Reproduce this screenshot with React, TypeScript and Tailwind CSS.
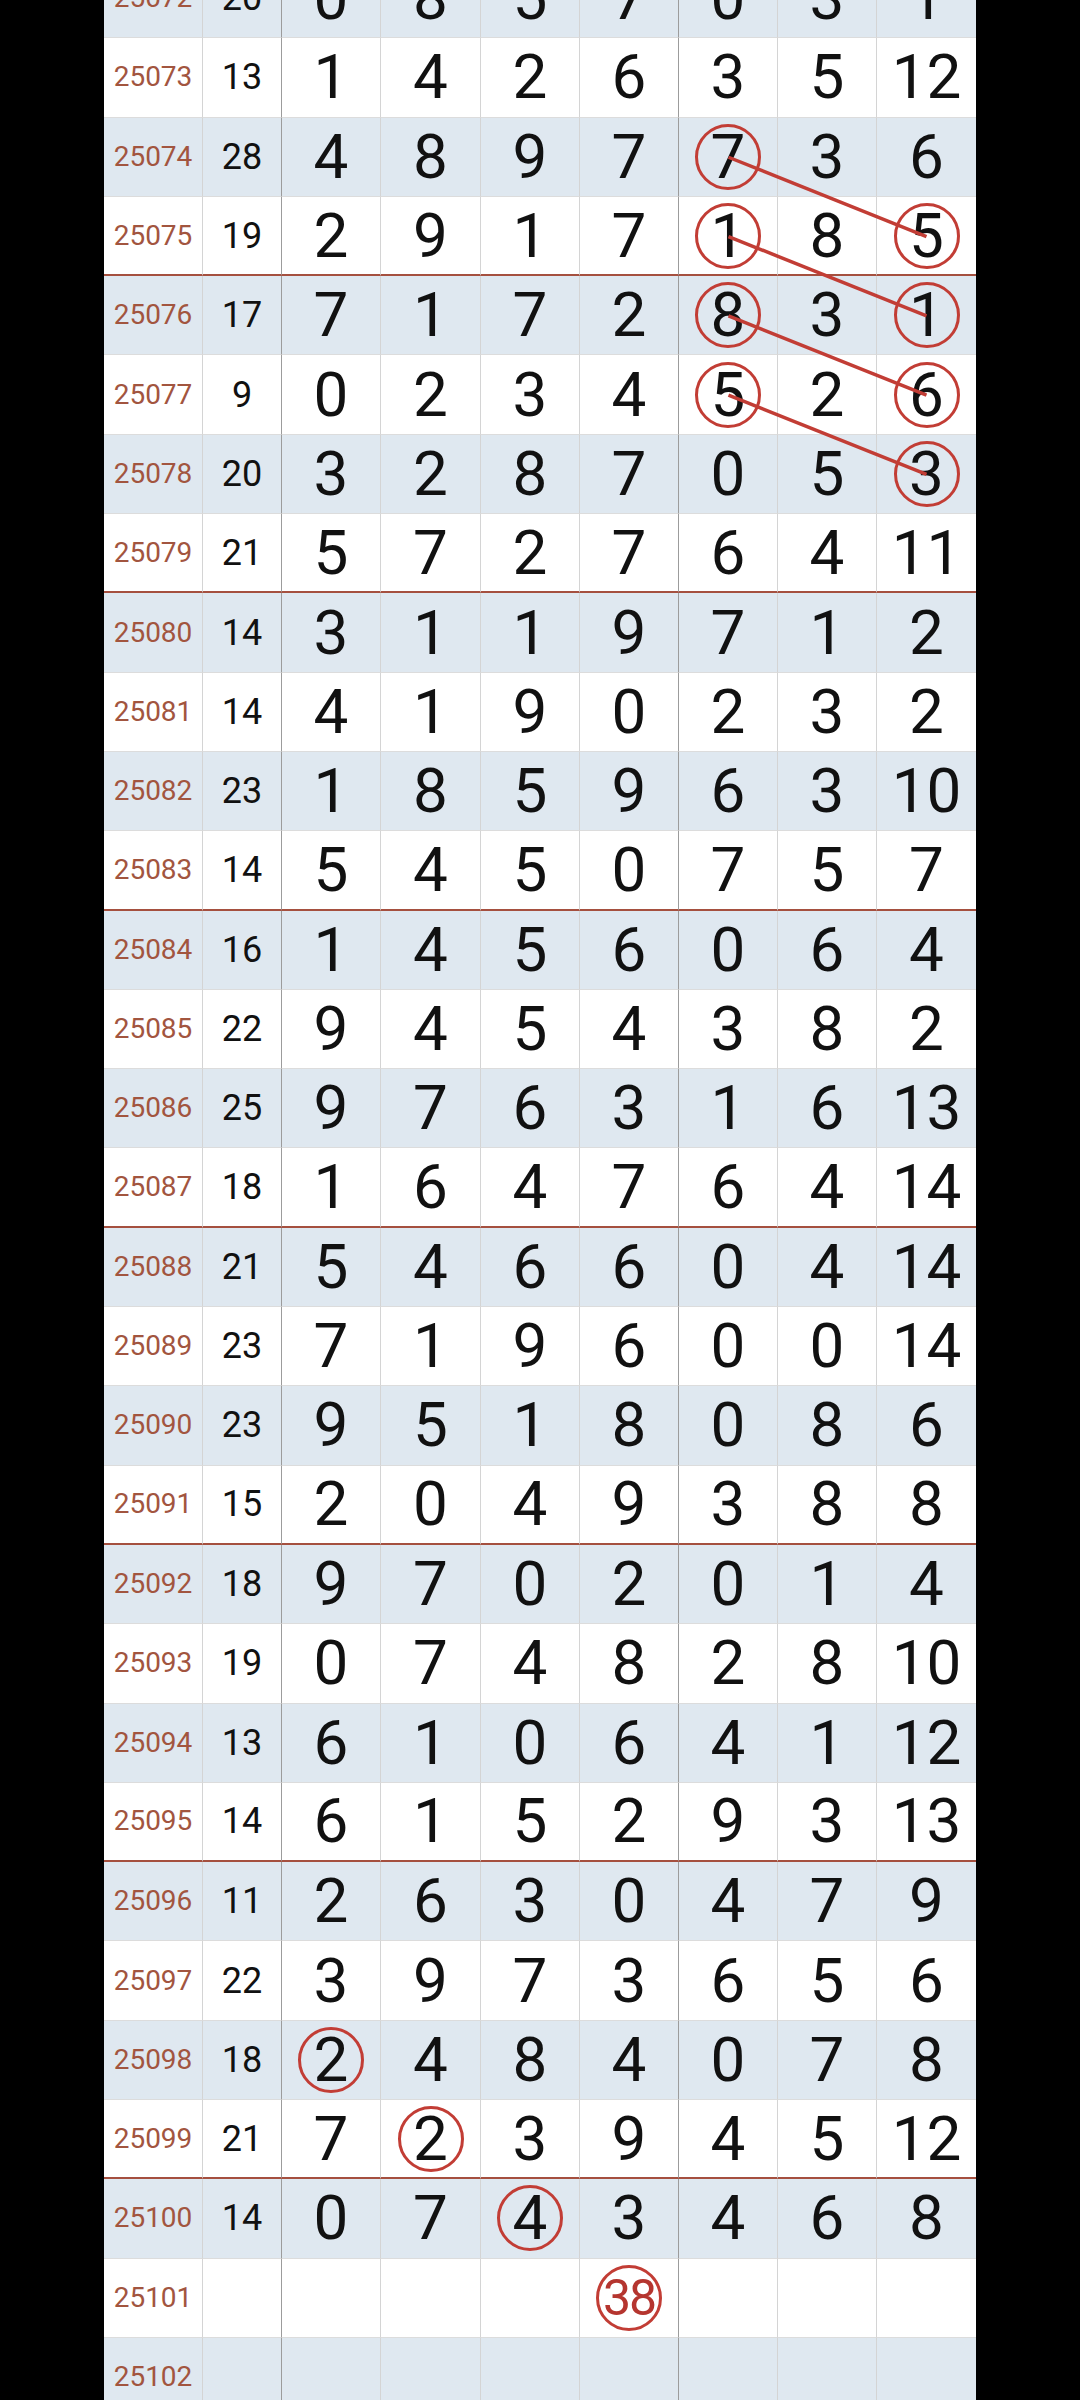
import React from 'react';

// Draw history table: id, sum of the first four, then seven digit columns
type Row = {
  id: number;
  sum?: number;
  nums: (number | null)[];
};

const raw: [number, number | null, (number | null)[]][] = [
  [25072, 20, [0, 8, 5, 7, 0, 3, 1]],
  [25073, 13, [1, 4, 2, 6, 3, 5, 12]],
  [25074, 28, [4, 8, 9, 7, 7, 3, 6]],
  [25075, 19, [2, 9, 1, 7, 1, 8, 5]],
  [25076, 17, [7, 1, 7, 2, 8, 3, 1]],
  [25077, 9, [0, 2, 3, 4, 5, 2, 6]],
  [25078, 20, [3, 2, 8, 7, 0, 5, 3]],
  [25079, 21, [5, 7, 2, 7, 6, 4, 11]],
  [25080, 14, [3, 1, 1, 9, 7, 1, 2]],
  [25081, 14, [4, 1, 9, 0, 2, 3, 2]],
  [25082, 23, [1, 8, 5, 9, 6, 3, 10]],
  [25083, 14, [5, 4, 5, 0, 7, 5, 7]],
  [25084, 16, [1, 4, 5, 6, 0, 6, 4]],
  [25085, 22, [9, 4, 5, 4, 3, 8, 2]],
  [25086, 25, [9, 7, 6, 3, 1, 6, 13]],
  [25087, 18, [1, 6, 4, 7, 6, 4, 14]],
  [25088, 21, [5, 4, 6, 6, 0, 4, 14]],
  [25089, 23, [7, 1, 9, 6, 0, 0, 14]],
  [25090, 23, [9, 5, 1, 8, 0, 8, 6]],
  [25091, 15, [2, 0, 4, 9, 3, 8, 8]],
  [25092, 18, [9, 7, 0, 2, 0, 1, 4]],
  [25093, 19, [0, 7, 4, 8, 2, 8, 10]],
  [25094, 13, [6, 1, 0, 6, 4, 1, 12]],
  [25095, 14, [6, 1, 5, 2, 9, 3, 13]],
  [25096, 11, [2, 6, 3, 0, 4, 7, 9]],
  [25097, 22, [3, 9, 7, 3, 6, 5, 6]],
  [25098, 18, [2, 4, 8, 4, 0, 7, 8]],
  [25099, 21, [7, 2, 3, 9, 4, 5, 12]],
  [25100, 14, [0, 7, 4, 3, 4, 6, 8]],
  [25101, null, [null, null, null, null, null, null, null]],
  [25102, null, [null, null, null, null, null, null, null]],
];

const rows: Row[] = raw.map(([id, sum, nums]) => ({ id, sum: sum ?? undefined, nums }));

// circled cells: "id-col" (col 0..6 in the digit columns)
const circled = new Set([
  '25074-4', '25075-4', '25075-6', '25076-4', '25076-6',
  '25077-4', '25077-6', '25078-6',
  '25098-0', '25099-1', '25100-2',
]);

const ROW_H = 79.3;
const COL_W = [99, 79, 99, 100, 99, 99, 99, 99, 99];
const colLeft = COL_W.map((_, i) => COL_W.slice(0, i).reduce((a, b) => a + b, 0));
const colCenter = (i: number) => colLeft[i] + COL_W[i] / 2;
const rowCenter = (id: number) => (id - 25072) * ROW_H + ROW_H / 2;

// links from 5th digit column to the 7th one row below
const links = [25074, 25075, 25076, 25077].map((id) => ({
  x1: colCenter(6),
  y1: rowCenter(id),
  x2: colCenter(8),
  y2: rowCenter(id + 1),
}));

const Circle: React.FC = () => (
  <span className="absolute left-1/2 top-1/2 w-[66px] h-[66px] -translate-x-1/2 -translate-y-1/2 rounded-full border-[3px] border-[#c23d35]" />
);

export default function App() {
  return (
    <div className="w-[1080px] h-[2400px] overflow-hidden bg-black" style={{ fontFamily: 'Roboto, "Noto Sans", sans-serif' }}>
      <div className="relative mx-auto w-[872px] mt-[-41px] bg-white">
        {rows.map((row) => {
          const even = row.id % 2 === 0;
          const groupEnd = (row.id - 25071) % 4 === 0;
          const bg = even ? 'bg-[#dfe8f0]' : 'bg-white';
          const bottom = groupEnd ? 'border-b-2 border-b-[#a5503f]' : 'border-b border-b-[#dcdcdc]';
          return (
            <div
              key={row.id}
              className={`grid grid-cols-[99px_79px_99px_100px_99px_99px_99px_99px_99px] h-[79.3px] ${bg}`}
            >
              <div className={`flex items-center justify-center border-r border-r-[#d4d4d4] text-[28px] text-[#a2553f] ${bottom}`}>
                {row.id}
              </div>
              <div className={`flex items-center justify-center border-r border-r-[#9c9c9c] text-[36px] text-[#111] ${bottom}`}>
                {row.sum ?? ''}
              </div>
              {row.nums.map((n, i) => {
                const key = `${row.id}-${i}`;
                const divider = i === 3 ? 'border-r-[#9c9c9c]' : 'border-r-[#d4d4d4]';
                const last = i === 6 ? 'border-r-0' : 'border-r';
                return (
                  <div
                    key={key}
                    className={`relative flex items-center justify-center text-[62px] leading-none text-[#111] ${last} ${divider} ${bottom}`}
                  >
                    {n !== null && <span>{n}</span>}
                    {circled.has(key) && <Circle />}
                    {row.id === 25101 && i === 3 && (
                      <>
                        <span className="text-[50px] text-[#b5352f] tracking-[-2px]">38</span>
                        <Circle />
                      </>
                    )}
                  </div>
                );
              })}
            </div>
          );
        })}

        <svg
          className="pointer-events-none absolute left-0 top-0"
          width={872}
          height={rows.length * ROW_H}
        >
          {links.map((l, i) => (
            <line key={i} x1={l.x1} y1={l.y1} x2={l.x2} y2={l.y2} stroke="#c23d35" strokeWidth={3.5} />
          ))}
        </svg>
      </div>
    </div>
  );
}
